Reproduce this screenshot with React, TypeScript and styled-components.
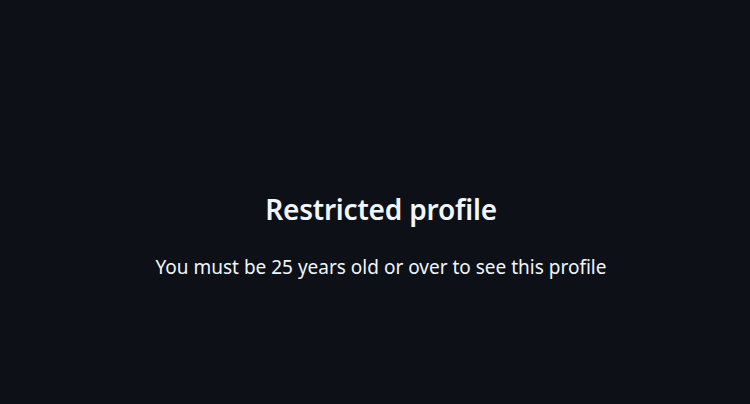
import React from "react";
import styled, { createGlobalStyle } from "styled-components";

const Global = createGlobalStyle`
  html, body { margin: 0; padding: 0; background: #0d1117; }
  body { font-family: "Noto Sans", "Open Sans", sans-serif; color: #f0f6fc; }
`;

const Page = styled.main`
  box-sizing: border-box;
  width: 750px;
  height: 404px;
  padding: 69px 0 0 12px;
  display: flex;
  flex-direction: column;
  align-items: center;
  justify-content: center;
  background: #0d1117;
`;

const Title = styled.h1`
  margin: 0;
  font-size: 28px;
  font-weight: 600;
  line-height: 35px;
  letter-spacing: -0.2px;
  color: #f0f6fc;
`;

const Subtitle = styled.p`
  margin: 26px 0 0;
  font-size: 19px;
  font-weight: 400;
  line-height: 28.5px;
  color: #f0f6fc;
`;

export default function App() {
  return (
    <>
      <Global />
      <Page>
        <Title>Restricted profile</Title>
        <Subtitle>You must be 25 years old or over to see this profile</Subtitle>
      </Page>
    </>
  );
}
